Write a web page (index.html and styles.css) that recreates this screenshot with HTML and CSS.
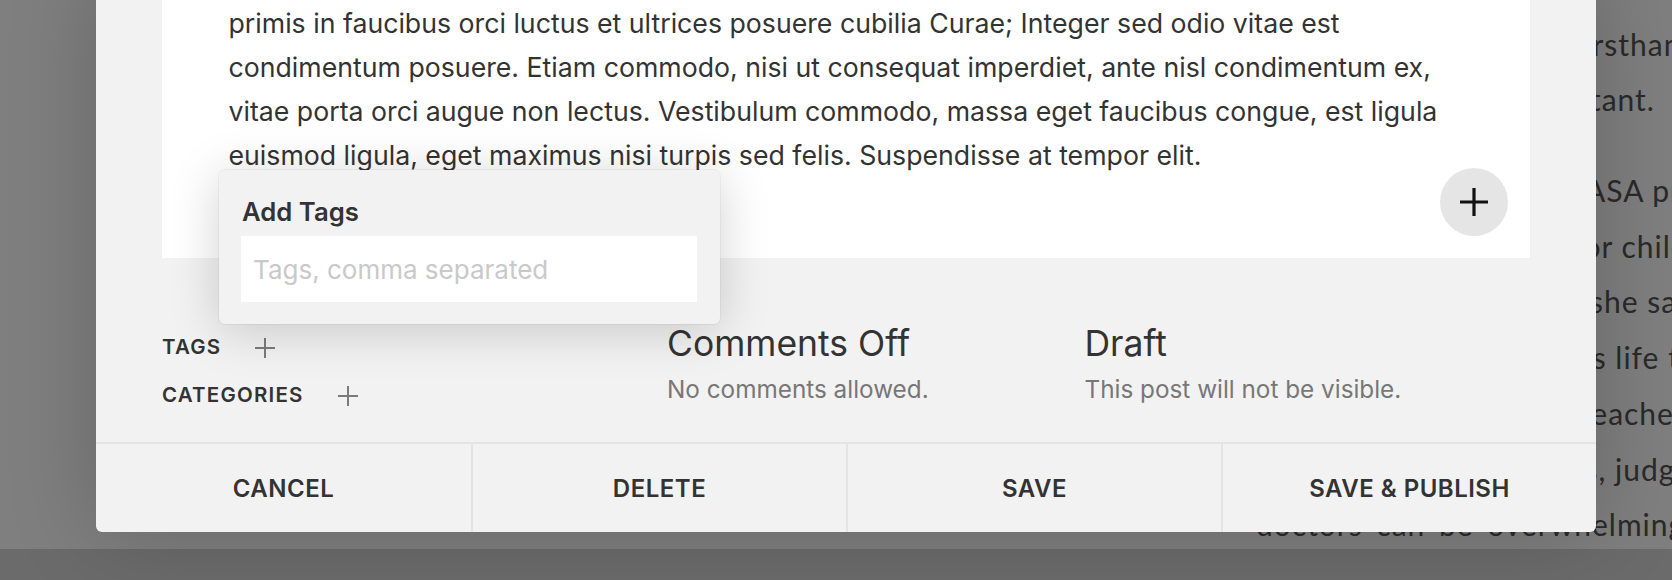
FILE: index.html
```html
<!DOCTYPE html>
<html lang="en">
<head>
<meta charset="utf-8">
<title>Edit Post</title>
<link rel="stylesheet" href="styles.css">
</head>
<body>
<div class="page">
  <div class="page-text">
    <p class="page-para">
      <span class="page-line">She went there to see firsthand</span>
      <span class="page-line">a reason why it is important.</span>
    </p>
    <p class="page-para">
      <span class="page-line">After just visiting the NASA program</span>
      <span class="page-line">It became a fine place for children</span>
      <span class="page-line">Looking back on it now she said</span>
      <span class="page-line">It changed the rest of his life to</span>
      <span class="page-line">She thanks his science teachers</span>
      <span class="page-line">parents and dear friends, judges</span>
      <span class="page-line page-line-wide">doctors can be overwhelming</span>
    </p>
  </div>
</div>
<div class="page-band"></div>

<div class="modal">
  <div class="editor">
    <p class="editor-text">
      <span class="editor-line">primis in faucibus orci luctus et ultrices posuere cubilia Curae; Integer sed odio vitae est</span>
      <span class="editor-line">condimentum posuere. Etiam commodo, nisi ut consequat imperdiet, ante nisl condimentum ex,</span>
      <span class="editor-line">vitae porta orci augue non lectus. Vestibulum commodo, massa eget faucibus congue, est ligula</span>
      <span class="editor-line">euismod ligula, eget maximus nisi turpis sed felis. Suspendisse at tempor elit.</span>
    </p>
    <button class="fab" type="button" aria-label="Add block">
      <svg width="28" height="28" viewBox="0 0 28 28"><path d="M14 0V28M0 14H28" stroke="#111" stroke-width="3.2" fill="none"/></svg>
    </button>
  </div>

  <div class="meta">
    <div class="taxo">
      <div class="taxo-row">
        <span class="taxo-label">TAGS</span>
        <svg class="taxo-plus" width="20" height="20" viewBox="0 0 20 20"><path d="M10 0V20M0 10H20" stroke="#7b7b7b" stroke-width="2" fill="none"/></svg>
      </div>
      <div class="taxo-row">
        <span class="taxo-label">CATEGORIES</span>
        <svg class="taxo-plus" width="20" height="20" viewBox="0 0 20 20"><path d="M10 0V20M0 10H20" stroke="#7b7b7b" stroke-width="2" fill="none"/></svg>
      </div>
    </div>
    <div class="meta-col">
      <div class="meta-title">Comments Off</div>
      <div class="meta-sub">No comments allowed.</div>
    </div>
    <div class="meta-col">
      <div class="meta-title">Draft</div>
      <div class="meta-sub">This post will not be visible.</div>
    </div>
  </div>

  <div class="actions">
    <button class="action" type="button">CANCEL</button>
    <button class="action" type="button">DELETE</button>
    <button class="action" type="button">SAVE</button>
    <button class="action" type="button">SAVE &amp; PUBLISH</button>
  </div>

  <div class="popover">
    <div class="popover-title">Add Tags</div>
    <input class="popover-input" type="text" placeholder="Tags, comma separated">
  </div>
</div>
</body>
</html>
```
FILE: styles.css
```css
html, body {
  margin: 0;
  padding: 0;
}
body {
  width: 1672px;
  height: 580px;
  overflow: hidden;
  position: relative;
  background: #7f7f7f;
  font-family: "Inter", "Noto Sans", sans-serif;
}

/* background page (dimmed) */
.page {
  height: 549px;
  overflow: hidden;
  display: flex;
  flex-direction: column;
  justify-content: flex-end;
}
.page-text {
  padding-left: 1256px;
  margin-bottom: -4px;
  font-family: "Lato", "Open Sans", sans-serif;
  font-size: 30px;
  letter-spacing: 1px;
  line-height: 55.7px;
  color: #2a2a2a;
}
.page-para {
  margin: 0;
}
.page-para + .page-para {
  margin-top: 35px;
}
.page-line {
  display: block;
  white-space: nowrap;
}
.page-line-wide {
  word-spacing: 5px;
}
.page-band {
  height: 31px;
  background: #6b6b6b;
}

/* modal */
.modal {
  position: absolute;
  left: 96px;
  top: -30px;
  width: 1500px;
  background: #f2f2f2;
  border-radius: 6px;
  box-shadow: 0 0 90px rgba(0, 0, 0, 0.2);
  color: #333;
}
.editor {
  position: relative;
  margin: 0 66px;
  background: #fff;
  padding: 31px 66px 81px 66.5px;
}
.editor-text {
  margin: 0;
  font-size: 26.7px;
  line-height: 44px;
  color: #333;
}
.editor-line {
  display: block;
  white-space: nowrap;
}
.fab {
  position: absolute;
  right: 22px;
  bottom: 22px;
  width: 68px;
  height: 68px;
  border: 0;
  padding: 0;
  border-radius: 50%;
  background: #e5e5e5;
  display: flex;
  align-items: center;
  justify-content: center;
}

.meta {
  display: grid;
  grid-template-columns: 505px 417.5px 1fr;
  height: 184px;
  box-sizing: border-box;
  padding: 64px 66px 0;
}
.taxo {
  padding-top: 0.5px;
}
.taxo-row {
  display: flex;
  align-items: center;
  height: 48px;
}
.taxo-label {
  font-size: 20.5px;
  font-weight: 600;
  letter-spacing: 1.2px;
  color: #333;
}
.taxo-plus {
  margin-left: 34px;
  margin-top: 3px;
}
.meta-title {
  font-size: 35.5px;
  line-height: 44px;
  color: #333;
}
.meta-sub {
  margin-top: 7px;
  font-size: 24.3px;
  line-height: 32px;
  color: #777;
}

.actions {
  display: grid;
  grid-template-columns: repeat(4, 1fr);
  border-top: 2px solid #e4e4e4;
}
.action {
  height: 88px;
  border: 0;
  background: transparent;
  font-family: "Inter", "Noto Sans", sans-serif;
  font-size: 24px;
  font-weight: 600;
  letter-spacing: 0.5px;
  color: #333;
  padding: 0;
}
.action + .action {
  border-left: 2px solid #e4e4e4;
}

/* tag popover */
.popover {
  position: absolute;
  left: 123px;
  top: 200px;
  width: 501px;
  box-sizing: border-box;
  padding: 27px 23px 22px 22px;
  background: #f2f2f2;
  border-radius: 6px;
  box-shadow: 0 6px 50px rgba(0, 0, 0, 0.18), 0 0 0 1px rgba(0, 0, 0, 0.04);
}
.popover-title {
  margin-left: 1px;
  margin-bottom: 9px;
  font-size: 25.7px;
  font-weight: 600;
  line-height: 30px;
  color: #333;
}
.popover-input {
  display: block;
  width: 456px;
  height: 66px;
  box-sizing: border-box;
  border: 0;
  padding: 0 12px;
  background: #fff;
  font-family: "Inter", "Noto Sans", sans-serif;
  font-size: 26px;
  color: #333;
  outline: none;
}
.popover-input::placeholder {
  color: #c9c9c9;
}
```
